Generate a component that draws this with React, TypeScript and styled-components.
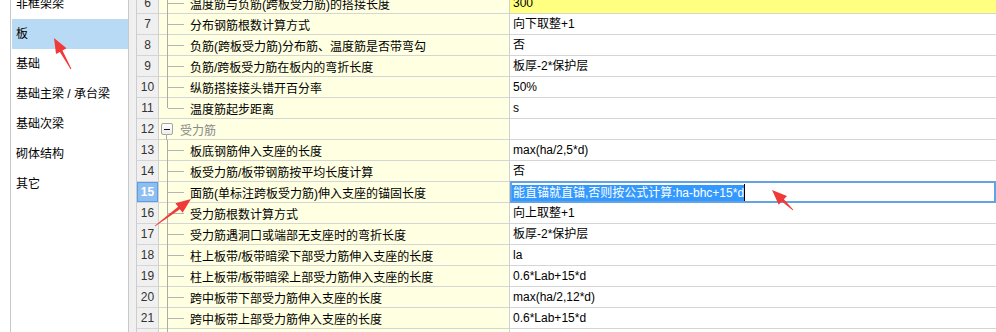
import React from "react";
import styled, { createGlobalStyle, css } from "styled-components";

const GlobalStyle = createGlobalStyle`
  html, body {
    margin: 0;
    padding: 0;
    background: #ffffff;
  }
  body {
    font-family: "Liberation Sans", "Noto Sans CJK SC", sans-serif;
    font-size: 12px;
    color: #000000;
  }
`;

const Page = styled.div`
  position: relative;
  display: flex;
  width: 996px;
  height: 332px;
  overflow: hidden;
  background: #ffffff;
`;

const Sidebar = styled.div`
  flex: none;
  width: 129px;
  height: 100%;
  padding-left: 10px;
  box-sizing: border-box;
  background: #ffffff;
`;

const CategoryList = styled.div`
  height: 100%;
  padding-left: 1px;
  border-left: 1px solid #c8c8c8;
  border-right: 1px solid #c8c8c8;
  box-sizing: border-box;
  overflow: hidden;
`;

const CategoryTrack = styled.div`
  margin-top: -11px;
`;

const CategoryItem = styled.div<{ $active?: boolean }>`
  height: 30px;
  line-height: 30px;
  padding-left: 4px;
  white-space: nowrap;
  background: ${({ $active }) => ($active ? "#b8daf4" : "transparent")};
`;

const Splitter = styled.div`
  flex: none;
  width: 7px;
  height: 100%;
  background: #f0f0f0;
`;

const Grid = styled.div`
  flex: 1;
  height: 100%;
  border-left: 1px solid #cdcdcd;
  overflow: hidden;
`;

const GridBody = styled.div`
  margin-top: -7px;
`;

const Row = styled.div`
  display: grid;
  grid-template-columns: 22px 351px 1fr;
  height: 21px;
`;

const cellBase = css`
  box-sizing: border-box;
  height: 21px;
  border-bottom: 1px solid #d5d5d5;
  white-space: nowrap;
`;

const NumberCell = styled.div<{ $active?: boolean }>`
  ${cellBase};
  border-right: 1px solid #d0d0d0;
  line-height: 20px;
  text-align: center;
  color: #333333;
  background: #f0f0f0;
  ${({ $active }) =>
    $active &&
    css`
      background: #8dbdf1;
      color: #ffffff;
      font-weight: bold;
      box-shadow: inset 0 0 0 1px #5b9de6;
    `}
`;

const DescCell = styled.div`
  ${cellBase};
  display: flex;
  align-items: center;
  padding-left: 2px;
  border-right: 1px solid #d0d0d0;
  background: #ffffe1;
`;

type GuideKind = "mid" | "last";

const Guide = styled.div<{ $kind: GuideKind }>`
  position: relative;
  flex: none;
  align-self: stretch;
  width: 29px;

  &::before {
    content: "";
    position: absolute;
    left: 6px;
    top: 0;
    width: 1px;
    bottom: ${({ $kind }) => ($kind === "last" ? "50%" : "-1px")};
    background: #ababab;
  }

  &::after {
    content: "";
    position: absolute;
    left: 7px;
    top: 50%;
    width: 16px;
    height: 1px;
    background: #b4b4b4;
  }
`;

const Toggle = styled.div`
  position: relative;
  flex: none;
  display: flex;
  align-items: center;
  justify-content: center;
  width: 12px;
  height: 12px;
  margin-right: 7px;
  box-sizing: border-box;
  border: 1px solid #a4a4a4;
  border-radius: 2px;
  background: linear-gradient(#ffffff, #ececec);

  &::after {
    content: "";
    position: absolute;
    left: 4px;
    top: 100%;
    width: 1px;
    height: 6px;
    background: #ababab;
  }
`;

const Minus = styled.span`
  width: 6px;
  height: 1px;
  background: #111111;
`;

const GroupTitle = styled.span`
  color: #8a8a8a;
`;

const ValueCell = styled.div<{ $highlight?: boolean }>`
  ${cellBase};
  position: relative;
  padding-left: 3px;
  line-height: 20px;
  background: ${({ $highlight }) => ($highlight ? "#ffff80" : "#ffffff")};
`;

const Editor = styled.div`
  position: absolute;
  top: -1px;
  left: 0;
  right: 0;
  bottom: -1px;
  display: flex;
  align-items: center;
  border: 2px solid #63a2e4;
  background: #ffffff;
`;

const Selection = styled.span`
  display: inline-block;
  height: 16px;
  line-height: 16px;
  padding-left: 1px;
  margin-top: 1px;
  color: #ffffff;
  background: #3399ff;
`;

const Caret = styled.span`
  display: inline-block;
  width: 1px;
  height: 17px;
  margin-top: 1px;
  background: #000000;
`;

const Overlay = styled.svg`
  position: absolute;
  top: 0;
  left: 0;
  pointer-events: none;
`;

type Item =
  | { no: number; group: string }
  | { no: number; label: string; value: string; kind: GuideKind; highlight?: boolean; editing?: boolean };

const categories = ["非框架梁", "板", "基础", "基础主梁 / 承台梁", "基础次梁", "砌体结构", "其它"];

const rows: Item[] = [
  { no: 6, label: "温度筋与负筋(跨板受力筋)的搭接长度", value: "300", kind: "mid", highlight: true },
  { no: 7, label: "分布钢筋根数计算方式", value: "向下取整+1", kind: "mid" },
  { no: 8, label: "负筋(跨板受力筋)分布筋、温度筋是否带弯勾", value: "否", kind: "mid" },
  { no: 9, label: "负筋/跨板受力筋在板内的弯折长度", value: "板厚-2*保护层", kind: "mid" },
  { no: 10, label: "纵筋搭接接头错开百分率", value: "50%", kind: "mid" },
  { no: 11, label: "温度筋起步距离", value: "s", kind: "last" },
  { no: 12, group: "受力筋" },
  { no: 13, label: "板底钢筋伸入支座的长度", value: "max(ha/2,5*d)", kind: "mid" },
  { no: 14, label: "板受力筋/板带钢筋按平均长度计算", value: "否", kind: "mid" },
  {
    no: 15,
    label: "面筋(单标注跨板受力筋)伸入支座的锚固长度",
    value: "能直锚就直锚,否则按公式计算:ha-bhc+15*d",
    kind: "mid",
    editing: true,
  },
  { no: 16, label: "受力筋根数计算方式", value: "向上取整+1", kind: "mid" },
  { no: 17, label: "受力筋遇洞口或端部无支座时的弯折长度", value: "板厚-2*保护层", kind: "mid" },
  { no: 18, label: "柱上板带/板带暗梁下部受力筋伸入支座的长度", value: "la", kind: "mid" },
  { no: 19, label: "柱上板带/板带暗梁上部受力筋伸入支座的长度", value: "0.6*Lab+15*d", kind: "mid" },
  { no: 20, label: "跨中板带下部受力筋伸入支座的长度", value: "max(ha/2,12*d)", kind: "mid" },
  { no: 21, label: "跨中板带上部受力筋伸入支座的长度", value: "0.6*Lab+15*d", kind: "mid" },
  { no: 22, label: "", value: "", kind: "mid" },
];

// arrow drawn as a tapered shaft with a filled head
function arrowPoints(x1: number, y1: number, x2: number, y2: number) {
  const head = 15;
  const headW = 6;
  const shaftW = 1.5;
  const len = Math.hypot(x2 - x1, y2 - y1);
  const ux = (x2 - x1) / len;
  const uy = (y2 - y1) / len;
  const nx = -uy;
  const ny = ux;
  const bx = x2 - ux * head;
  const by = y2 - uy * head;
  const pts = [
    [x1 + nx * 0.4, y1 + ny * 0.4],
    [bx + nx * shaftW, by + ny * shaftW],
    [bx + nx * headW, by + ny * headW],
    [x2, y2],
    [bx - nx * headW, by - ny * headW],
    [bx - nx * shaftW, by - ny * shaftW],
    [x1 - nx * 0.4, y1 - ny * 0.4],
  ];
  return pts.map(([x, y]) => `${x.toFixed(1)},${y.toFixed(1)}`).join(" ");
}

const arrows = [
  [71, 69, 54, 38],
  [155, 226, 191, 199],
  [793, 210, 772, 190],
];

const App: React.FC = () => {
  return (
    <Page>
      <GlobalStyle />
      <Sidebar>
        <CategoryList>
          <CategoryTrack>
            {categories.map((c) => (
              <CategoryItem key={c} $active={c === "板"}>
                {c}
              </CategoryItem>
            ))}
          </CategoryTrack>
        </CategoryList>
      </Sidebar>
      <Splitter />
      <Grid>
        <GridBody>
          {rows.map((r) =>
            "group" in r ? (
              <Row key={r.no}>
                <NumberCell>{r.no}</NumberCell>
                <DescCell>
                  <Toggle>
                    <Minus />
                  </Toggle>
                  <GroupTitle>{r.group}</GroupTitle>
                </DescCell>
                <ValueCell />
              </Row>
            ) : (
              <Row key={r.no}>
                <NumberCell $active={r.editing}>{r.no}</NumberCell>
                <DescCell>
                  <Guide $kind={r.kind} />
                  {r.label}
                </DescCell>
                <ValueCell $highlight={r.highlight}>
                  {r.editing ? (
                    <Editor>
                      <Selection>{r.value}</Selection>
                      <Caret />
                    </Editor>
                  ) : (
                    r.value
                  )}
                </ValueCell>
              </Row>
            )
          )}
        </GridBody>
      </Grid>
      <Overlay width={996} height={332} viewBox="0 0 996 332">
        {arrows.map(([x1, y1, x2, y2], i) => (
          <polygon key={i} points={arrowPoints(x1, y1, x2, y2)} fill="#f03a3a" />
        ))}
      </Overlay>
    </Page>
  );
};

export default App;
